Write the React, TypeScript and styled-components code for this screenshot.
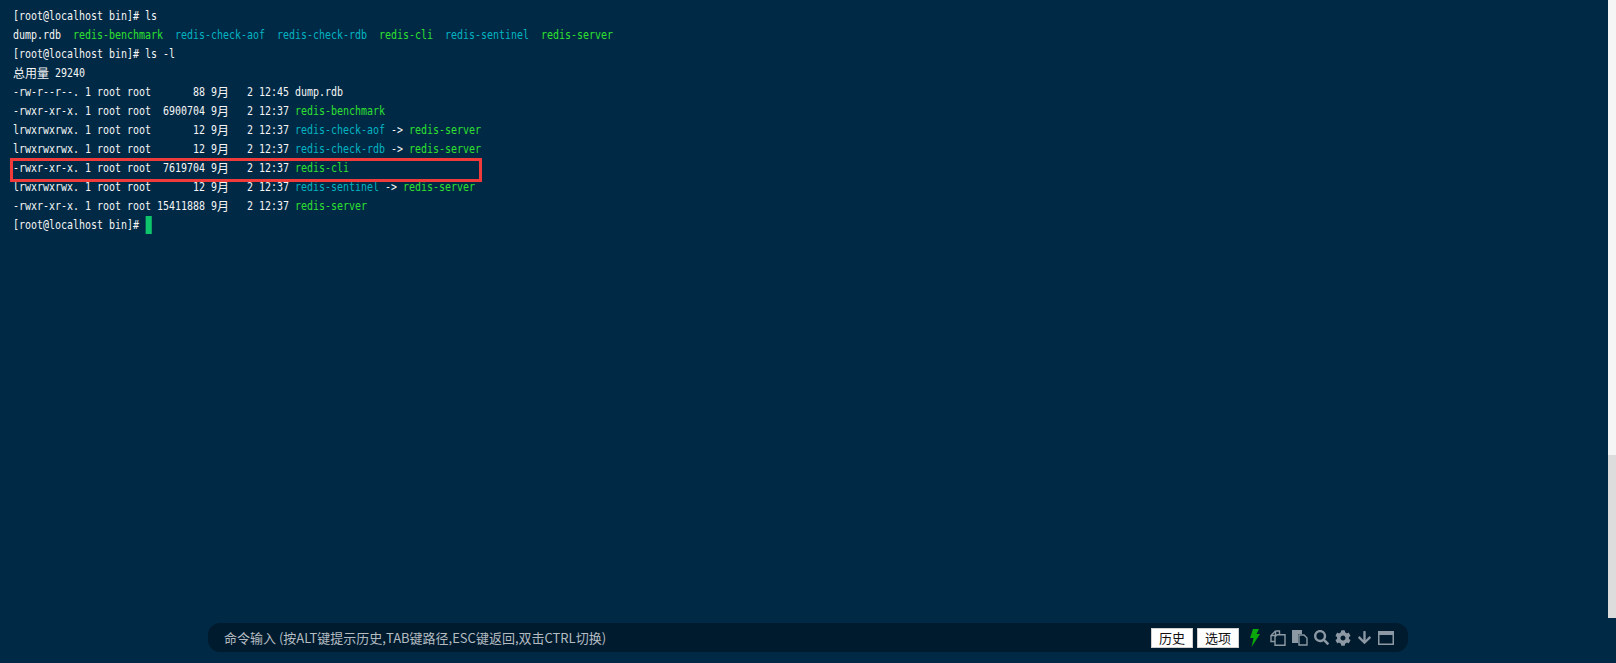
import React from 'react'
import styled, { createGlobalStyle } from 'styled-components'
import { FaArrowDown, FaCog, FaSearch } from 'react-icons/fa'

const CELL = 7.826

const GlobalStyle = createGlobalStyle`
  html, body {
    margin: 0;
    height: 100%;
    overflow: hidden;
    background: #002945;
  }
`

const Page = styled.div`
  position: relative;
  display: flex;
  width: 1616px;
  height: 663px;
  background: #002945;
  overflow: hidden;
`

const Terminal = styled.div`
  flex: 1;
  padding: 6px 0 0 13px;
`

const Row = styled.div`
  height: 19px;
  line-height: 19px;
  white-space: pre;
  font-family: 'DejaVu Sans Mono', monospace;
  font-size: 13px;
  color: #f6f6f6;
  transform: scaleX(0.7667);
  transform-origin: left center;
`

const Wide = styled.span<{ $cells: number }>`
  display: inline-block;
  width: ${(p) => p.$cells * CELL}px;
  font-family: 'Noto Sans CJK SC', sans-serif;
  font-size: 12px;
  line-height: 19px;
  vertical-align: top;
`

const WideGlyph = styled.span`
  display: inline-block;
  transform: scaleX(1.304);
  transform-origin: left center;
`

const Exec = styled.span`
  color: #2fe02f;
`

const Link = styled.span`
  color: #00b4c2;
`

const Cursor = styled.span`
  display: inline-block;
  width: ${CELL}px;
  height: 18px;
  background: #0fc56c;
  vertical-align: top;
  margin-top: 1px;
  margin-left: 1px;
`

const Highlight = styled.div`
  position: absolute;
  left: 10px;
  top: 158px;
  width: 472px;
  height: 24px;
  box-sizing: border-box;
  border: 3px solid #f13a3a;
`

const Scrollbar = styled.div`
  display: flex;
  flex-direction: column;
  width: 8px;
  height: 618px;
  background: #f5f5f5;
  justify-content: flex-end;
`

const Thumb = styled.div`
  height: 163px;
  background: #dcdcdc;
`

const CommandBar = styled.div`
  position: absolute;
  left: 208px;
  top: 623px;
  width: 1200px;
  height: 29px;
  box-sizing: border-box;
  padding: 0 14px 0 16px;
  display: flex;
  align-items: center;
  border-radius: 12px;
  background: #001b2e;
`

const Hint = styled.div`
  flex: 1;
  font-family: 'Noto Sans CJK SC', sans-serif;
  font-size: 13px;
  color: #b4bcc2;
`

const Buttons = styled.div`
  display: flex;
  gap: 4px;
  margin-right: 11px;
`

const Button = styled.button`
  width: 42px;
  height: 20px;
  padding: 0;
  border: 1px solid #d0d0d0;
  background: #fff;
  color: #111;
  font-family: 'Noto Sans CJK SC', sans-serif;
  font-size: 13px;
  line-height: 18px;
`

const Tools = styled.div`
  display: flex;
  align-items: center;
  gap: 6px;
  color: #8c99a4;
`

const ToolIcon = styled.svg`
  width: 16px;
  height: 16px;
  display: block;
`

const BoltIcon = styled(ToolIcon)`
  width: 10px;
  height: 18px;
  margin-right: 4px;
  color: #0aa80a;
`

const Bolt = () => (
  <BoltIcon viewBox='0 0 10 18'>
    <path d='M3 0h6L6.500 5H10L1.500 18 3.500 9H0z' fill='currentColor' />
  </BoltIcon>
)

const Copy = () => (
  <ToolIcon viewBox='0 0 16 16' fill='none' stroke='currentColor' strokeWidth='1.4'>
    <path d='M5.500 1H9.500V4.500M5.500 1 1 5.500V11.500H5' />
    <path d='M5.500 1V5.500H1' />
    <path d='M9.500 4.700H7L5 6.700V15.200H15V4.700z' />
  </ToolIcon>
)

const Paste = () => (
  <ToolIcon viewBox='0 0 16 16'>
    <path d='M0 0h10v4H6v9H0z' fill='currentColor' />
    <path d='M7 5h5l3 3v7H7z' fill='none' stroke='currentColor' strokeWidth='1.4' />
  </ToolIcon>
)

const WindowIcon = () => (
  <ToolIcon viewBox='0 0 16 14'>
    <path fillRule='evenodd' d='M0 0h16v14H0zM1.500 4v8.500h13V4z' fill='currentColor' />
  </ToolIcon>
)

const Month = () => (
  <>
    9
    <Wide $cells={2}>
      <WideGlyph>月</WideGlyph>
    </Wide>
  </>
)

const Prompt = '[root@localhost bin]#'

const App = () => (
  <Page>
    <GlobalStyle />
    <Terminal>
      <Row>{Prompt} ls</Row>
      <Row>
        dump.rdb  <Exec>redis-benchmark</Exec>  <Link>redis-check-aof</Link>  <Link>redis-check-rdb</Link>  <Exec>redis-cli</Exec>  <Link>redis-sentinel</Link>  <Exec>redis-server</Exec>
      </Row>
      <Row>{Prompt} ls -l</Row>
      <Row>
        <Wide $cells={6}>
          <WideGlyph>总用量</WideGlyph>
        </Wide>{' '}
        29240
      </Row>
      <Row>
        {'-rw-r--r--. 1 root root       88 '}
        <Month />
        {'   2 12:45 dump.rdb'}
      </Row>
      <Row>
        {'-rwxr-xr-x. 1 root root  6900704 '}
        <Month />
        {'   2 12:37 '}
        <Exec>redis-benchmark</Exec>
      </Row>
      <Row>
        {'lrwxrwxrwx. 1 root root       12 '}
        <Month />
        {'   2 12:37 '}
        <Link>redis-check-aof</Link> {'-> '}
        <Exec>redis-server</Exec>
      </Row>
      <Row>
        {'lrwxrwxrwx. 1 root root       12 '}
        <Month />
        {'   2 12:37 '}
        <Link>redis-check-rdb</Link> {'-> '}
        <Exec>redis-server</Exec>
      </Row>
      <Row>
        {'-rwxr-xr-x. 1 root root  7619704 '}
        <Month />
        {'   2 12:37 '}
        <Exec>redis-cli</Exec>
      </Row>
      <Row>
        {'lrwxrwxrwx. 1 root root       12 '}
        <Month />
        {'   2 12:37 '}
        <Link>redis-sentinel</Link> {'-> '}
        <Exec>redis-server</Exec>
      </Row>
      <Row>
        {'-rwxr-xr-x. 1 root root 15411888 '}
        <Month />
        {'   2 12:37 '}
        <Exec>redis-server</Exec>
      </Row>
      <Row>
        {Prompt} <Cursor />
      </Row>
    </Terminal>
    <Scrollbar>
      <Thumb />
    </Scrollbar>
    <Highlight />
    <CommandBar>
      <Hint>命令输入 (按ALT键提示历史,TAB键路径,ESC键返回,双击CTRL切换)</Hint>
      <Buttons>
        <Button>历史</Button>
        <Button>选项</Button>
      </Buttons>
      <Tools>
        <Bolt />
        <Copy />
        <Paste />
        <FaSearch size={15} />
        <FaCog size={16} />
        <FaArrowDown size={15} />
        <WindowIcon />
      </Tools>
    </CommandBar>
  </Page>
)

export default App
